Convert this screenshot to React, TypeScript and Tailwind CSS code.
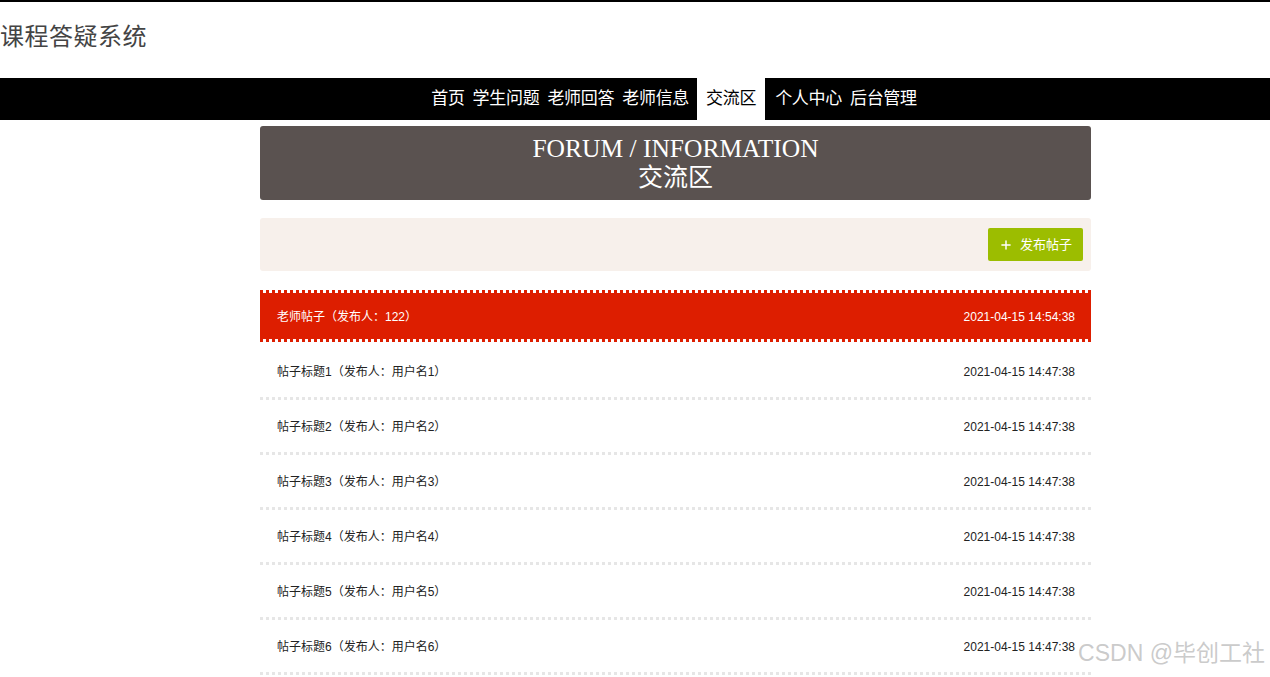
import { Plus } from "lucide-react";

const navItems = [
  { label: "首页" },
  { label: "学生问题" },
  { label: "老师回答" },
  { label: "老师信息" },
  { label: "交流区", active: true },
  { label: "个人中心" },
  { label: "后台管理" },
];

const posts = [
  { title: "帖子标题1（发布人：用户名1）", time: "2021-04-15 14:47:38" },
  { title: "帖子标题2（发布人：用户名2）", time: "2021-04-15 14:47:38" },
  { title: "帖子标题3（发布人：用户名3）", time: "2021-04-15 14:47:38" },
  { title: "帖子标题4（发布人：用户名4）", time: "2021-04-15 14:47:38" },
  { title: "帖子标题5（发布人：用户名5）", time: "2021-04-15 14:47:38" },
  { title: "帖子标题6（发布人：用户名6）", time: "2021-04-15 14:47:38" },
];

const sans = "font-['Liberation_Sans','Noto_Sans_CJK_SC',sans-serif]";

export default function App() {
  return (
    <div className={`relative h-[677px] w-full overflow-hidden bg-white ${sans}`}>
      <div className="w-[1351px]">
        {/* HEADER */}
        <header className="border-t-2 border-black">
          <div className="flex h-[76px] items-center pb-[6px]">
            <h1 className="text-[24px] font-normal tracking-[0.5px] text-[#444]">课程答疑系统</h1>
          </div>

          {/* NAV */}
          <nav className="flex h-[42px] items-stretch justify-center bg-black pr-[3px]">
            {navItems.map((item) =>
              item.active ? (
                <a
                  key={item.label}
                  href="#"
                  className="ml-[4px] mr-[6px] flex items-center bg-white px-[9px] text-[17px] tracking-[-0.3px] text-black"
                >
                  {item.label}
                </a>
              ) : (
                <a
                  key={item.label}
                  href="#"
                  className="flex items-center px-[4px] text-[17px] tracking-[-0.3px] text-white"
                >
                  {item.label}
                </a>
              )
            )}
          </nav>
        </header>

        <main className="mx-auto w-[831px] pt-[6px]">
          {/* TITLE */}
          <div className="flex h-[74px] flex-col items-center justify-center rounded-[3px] bg-[#5a5250] font-['Liberation_Serif','Noto_Sans_CJK_SC',serif] text-white">
            <div className="text-[25.5px] leading-[29px]">FORUM / INFORMATION</div>
            <div className="text-[25px] leading-[30px]">交流区</div>
          </div>

          {/* TOOLBAR */}
          <div className="mt-[18px] flex h-[53px] items-start justify-end rounded-[3px] bg-[#f7f0eb] px-2 pt-[10px]">
            <button className="flex h-[33px] w-[95px] items-center justify-center gap-[7px] rounded-[2px] bg-[#9cbd00] text-[13px] text-white">
              <Plus className="h-[14px] w-[14px]" strokeWidth={2.5} />
              发布帖子
            </button>
          </div>

          {/* LIST */}
          <div className="mt-[19px] text-[12px]">
            <div className="flex h-[52px] items-center justify-between border-y-[3px] border-dotted border-[#dd1e00] bg-[#dd1e00] bg-clip-padding pl-[17px] pr-4 pt-[1px] text-white">
              <span>老师帖子（发布人：122）</span>
              <span>2021-04-15 14:54:38</span>
            </div>
            {posts.map((p, i) => (
              <div
                key={p.title}
                className={`flex h-[55px] items-center justify-between border-b-[3px] border-dotted border-[#e6e6e6] pl-[17px] pr-4 text-[#222] ${
                  i === 0 ? "h-[58px] pt-[5px]" : "pt-[2px]"
                }`}
              >
                <span>{p.title}</span>
                <span>{p.time}</span>
              </div>
            ))}
          </div>
        </main>
      </div>

      {/* watermark */}
      <div className="pointer-events-none absolute bottom-[7px] right-[5px] text-[23px] text-[#bdbdbd]/80">
        CSDN @毕创工社
      </div>
    </div>
  );
}
